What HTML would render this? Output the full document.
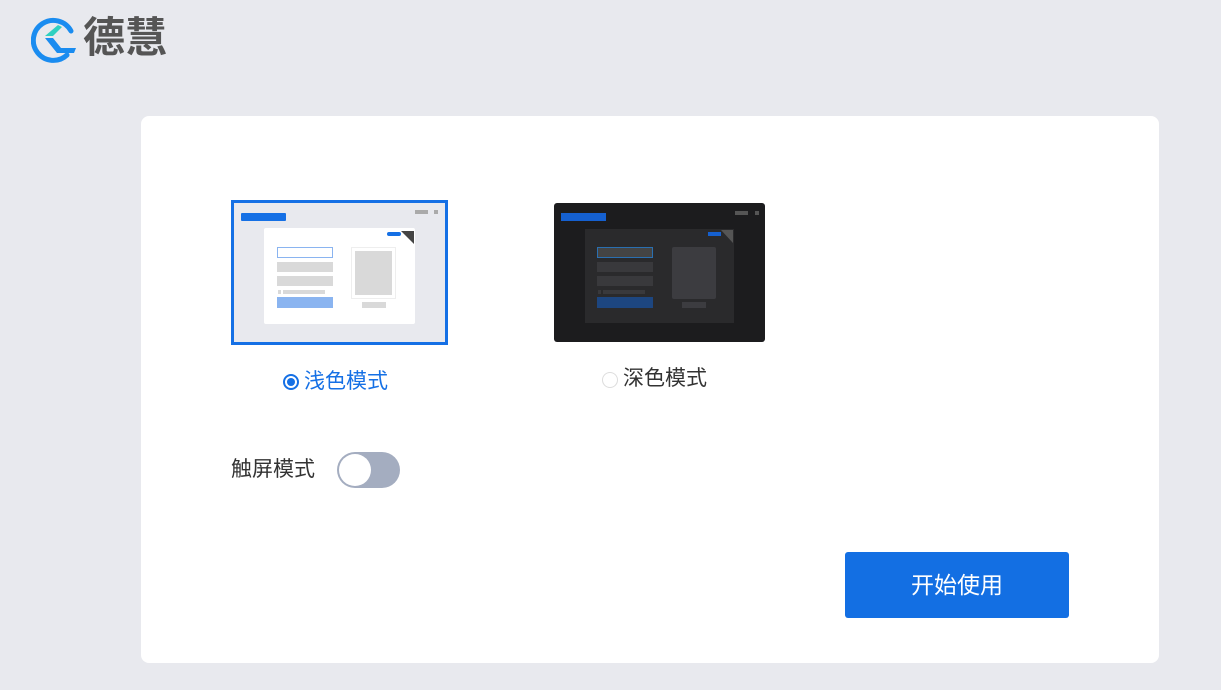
<!DOCTYPE html>
<html><head><meta charset="utf-8"><style>
*{margin:0;padding:0;box-sizing:border-box}
body{width:1221px;height:690px;background:#e8e9ee;position:relative;overflow:hidden;font-family:"Liberation Sans","Noto Sans CJK SC",sans-serif}
.a{position:absolute}
.card{left:141px;top:116px;width:1018px;height:547px;background:#fff;border-radius:8px}
.t{font-size:21px;line-height:24px;white-space:nowrap}
</style></head><body>
<svg class="a" style="left:31px;top:17px" width="48" height="46" viewBox="0 0 48 46">
<path d="M36 38 A20 20 0 1 1 40 14" fill="none" stroke="#1a8cf0" stroke-width="5" stroke-linecap="round"/>
<path d="M27 8 L14 19 L22 19 L31 10 Z" fill="#2fd0c0"/>
<path d="M14 21 L22 21 L30 31 L45 31 L43 36 L26 36 Z" fill="#1a8cf0"/>
</svg>
<div class="a" style="left:83px;top:13px;font-size:42px;line-height:50px;color:#555;font-weight:bold;letter-spacing:0px">德慧</div>
<div class="a card"></div>

<!-- light preview -->
<div class="a" style="left:231px;top:200px;width:217px;height:145px;border:3px solid #1570e5;background:#e8e9ee"></div>
<div class="a" style="left:241px;top:213px;width:45px;height:8px;background:#1570e5;border-radius:1px"></div>
<div class="a" style="left:415px;top:210px;width:13px;height:4px;background:#aaa"></div>
<div class="a" style="left:434px;top:210px;width:4px;height:4px;background:#aaa"></div>
<div class="a" style="left:264px;top:228px;width:151px;height:96px;background:#fff;border-radius:2px"></div>
<div class="a" style="left:387px;top:232px;width:14px;height:4px;background:#1570e5;border-radius:2px"></div>
<svg class="a" style="left:401px;top:231px" width="13" height="13"><path d="M0 0H13V13Z" fill="#444"/></svg>
<div class="a" style="left:277px;top:247px;width:56px;height:11px;border:1px solid #8ab4f0"></div>
<div class="a" style="left:277px;top:262px;width:56px;height:10px;background:#d9d9d9"></div>
<div class="a" style="left:277px;top:276px;width:56px;height:10px;background:#d9d9d9"></div>
<div class="a" style="left:278px;top:290px;width:3px;height:4px;background:#d9d9d9"></div>
<div class="a" style="left:283px;top:290px;width:42px;height:4px;background:#d9d9d9"></div>
<div class="a" style="left:277px;top:297px;width:56px;height:11px;background:#8ab4f0"></div>
<div class="a" style="left:351px;top:247px;width:45px;height:52px;border:1px solid #eee"></div>
<div class="a" style="left:355px;top:251px;width:37px;height:44px;background:#d9d9d9"></div>
<div class="a" style="left:362px;top:302px;width:24px;height:6px;background:#d9d9d9"></div>

<!-- dark preview -->
<div class="a" style="left:554px;top:203px;width:211px;height:139px;background:#1c1c1e;border-radius:3px"></div>
<div class="a" style="left:561px;top:213px;width:45px;height:8px;background:#1560d0"></div>
<div class="a" style="left:735px;top:211px;width:13px;height:4px;background:#555"></div>
<div class="a" style="left:755px;top:211px;width:4px;height:4px;background:#555"></div>
<div class="a" style="left:585px;top:229px;width:149px;height:94px;background:#2a2a2c"></div>
<div class="a" style="left:708px;top:232px;width:13px;height:4px;background:#1560d0"></div>
<svg class="a" style="left:721px;top:230px" width="12" height="13"><path d="M0 0H12V13Z" fill="#555"/></svg>
<div class="a" style="left:597px;top:247px;width:56px;height:11px;border:1px solid #2a6fb0;background:#444"></div>
<div class="a" style="left:597px;top:262px;width:56px;height:10px;background:#39393c"></div>
<div class="a" style="left:597px;top:276px;width:56px;height:10px;background:#39393c"></div>
<div class="a" style="left:598px;top:290px;width:3px;height:4px;background:#39393c"></div>
<div class="a" style="left:603px;top:290px;width:42px;height:4px;background:#39393c"></div>
<div class="a" style="left:597px;top:297px;width:56px;height:11px;background:#1d4680"></div>
<div class="a" style="left:672px;top:247px;width:44px;height:52px;background:#3c3c40;border-radius:2px"></div>
<div class="a" style="left:682px;top:302px;width:24px;height:6px;background:#3c3c40"></div>

<!-- radios -->
<div class="a" style="left:283px;top:374px;width:16px;height:16px;border:2px solid #1570e5;border-radius:50%"></div>
<div class="a" style="left:287px;top:378px;width:8px;height:8px;background:#1570e5;border-radius:50%"></div>
<div class="a t" style="left:304px;top:370px;color:#1570e5">浅色模式</div>
<div class="a" style="left:602px;top:372px;width:16px;height:16px;border:1px solid #ddd;border-radius:50%"></div>
<div class="a t" style="left:623px;top:367px;color:#333">深色模式</div>

<div class="a t" style="left:231px;top:458px;color:#333">触屏模式</div>
<div class="a" style="left:337px;top:452px;width:63px;height:36px;background:#a4adc0;border-radius:18px"></div>
<div class="a" style="left:339px;top:454px;width:32px;height:32px;background:#fff;border-radius:50%"></div>

<div class="a" style="left:845px;top:552px;width:224px;height:66px;background:#136fe3;border-radius:3px;color:#fff;font-size:23px;line-height:66px;text-align:center">开始使用</div>
</body></html>
